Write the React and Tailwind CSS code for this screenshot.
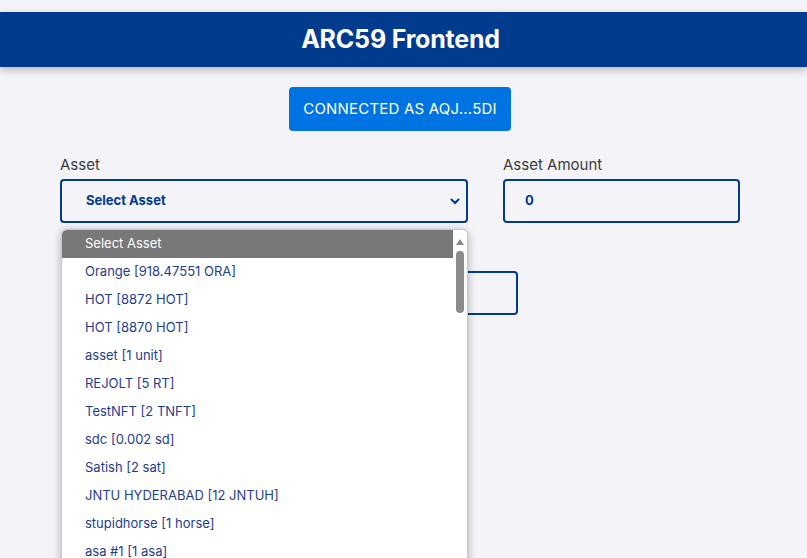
import React from 'react';

const assets = [
  'Orange [918.47551 ORA]',
  'HOT [8872 HOT]',
  'HOT [8870 HOT]',
  'asset [1 unit]',
  'REJOLT [5 RT]',
  'TestNFT [2 TNFT]',
  'sdc [0.002 sd]',
  'Satish [2 sat]',
  'JNTU HYDERABAD [12 JNTUH]',
  'stupidhorse [1 horse]',
  'asa #1 [1 asa]',
];

export default function App() {
  return (
    <div className="h-[558px] w-full overflow-hidden bg-[#f4f4f8] pt-[12px] font-['Inter',sans-serif]">
      {/* Header */}
      <header className="flex h-[55px] items-center justify-center bg-[#003b8e] pr-[6px] shadow-[0_3px_8px_rgba(0,0,0,0.25)]">
        <h1 className="text-[25px] font-bold tracking-[-0.2px] text-white">ARC59 Frontend</h1>
      </header>

      <div className="mt-[20px] flex justify-center pr-[7px]">
        <button className="h-[44px] w-[222px] rounded-[4px] bg-[#0073e3] text-[15px] tracking-[0.2px] text-white">
          CONNECTED AS AQJ...5DI
        </button>
      </div>

      {/* Form */}
      <div className="relative mt-[22px] pl-[60px]">
        <div className="grid w-[680px] grid-cols-[408px_237px] gap-x-[35px]">
          <div>
            <label className="block text-[15px] leading-[24px] text-[#3b3b3b]">Asset</label>
            <div className="mt-[2px] flex h-[44px] items-center justify-between rounded-[4px] border-2 border-[#003b8e] pl-[24px] pr-[6px]">
              <span className="text-[13px] font-bold text-[#003b8e]">Select Asset</span>
              <svg width="10" height="7" viewBox="0 0 10 7" fill="none">
                <path d="M1.5 1.5 L5 5 L8.5 1.5" stroke="#003b8e" strokeWidth="2" strokeLinecap="round" />
              </svg>
            </div>
          </div>
          <div>
            <label className="block text-[15px] leading-[24px] text-[#3b3b3b]">Asset Amount</label>
            <div className="mt-[2px] flex h-[44px] items-center rounded-[4px] border-2 border-[#003b8e] pl-[20px]">
              <span className="text-[13px] font-bold text-[#003b8e]">0</span>
            </div>
          </div>
        </div>

        {/* Receiver row (label hidden under the open list) */}
        <div className="ml-[4px] mt-[48px] h-[44px] w-[454px] rounded-[4px] border-2 border-[#003b8e]" />

        {/* Open dropdown list */}
        <div className="absolute left-[61px] top-[76px] flex h-[340px] w-[407px] overflow-hidden rounded-t-[6px] border border-[#c8c8c8] bg-white shadow-[0_2px_8px_rgba(0,0,0,0.3)]">
          <ul className="flex-1 text-[13px]">
            <li className="flex h-[28px] items-center bg-[#787878] pl-[23px] text-white">Select Asset</li>
            {assets.map((a, i) => (
              <li key={i} className="flex h-[28px] items-center pl-[23px] text-[#1f3d8f]">
                {a}
              </li>
            ))}
          </ul>
          <div className="flex w-[14px] flex-col items-center bg-white">
            <svg className="mt-[9px]" width="8" height="6" viewBox="0 0 8 6">
              <path d="M4 0 L8 6 L0 6 Z" fill="#8a8a8a" />
            </svg>
            <div className="mt-[6px] h-[62px] w-[8px] rounded-full bg-[#8c8c8c]" />
          </div>
        </div>
      </div>
    </div>
  );
}
